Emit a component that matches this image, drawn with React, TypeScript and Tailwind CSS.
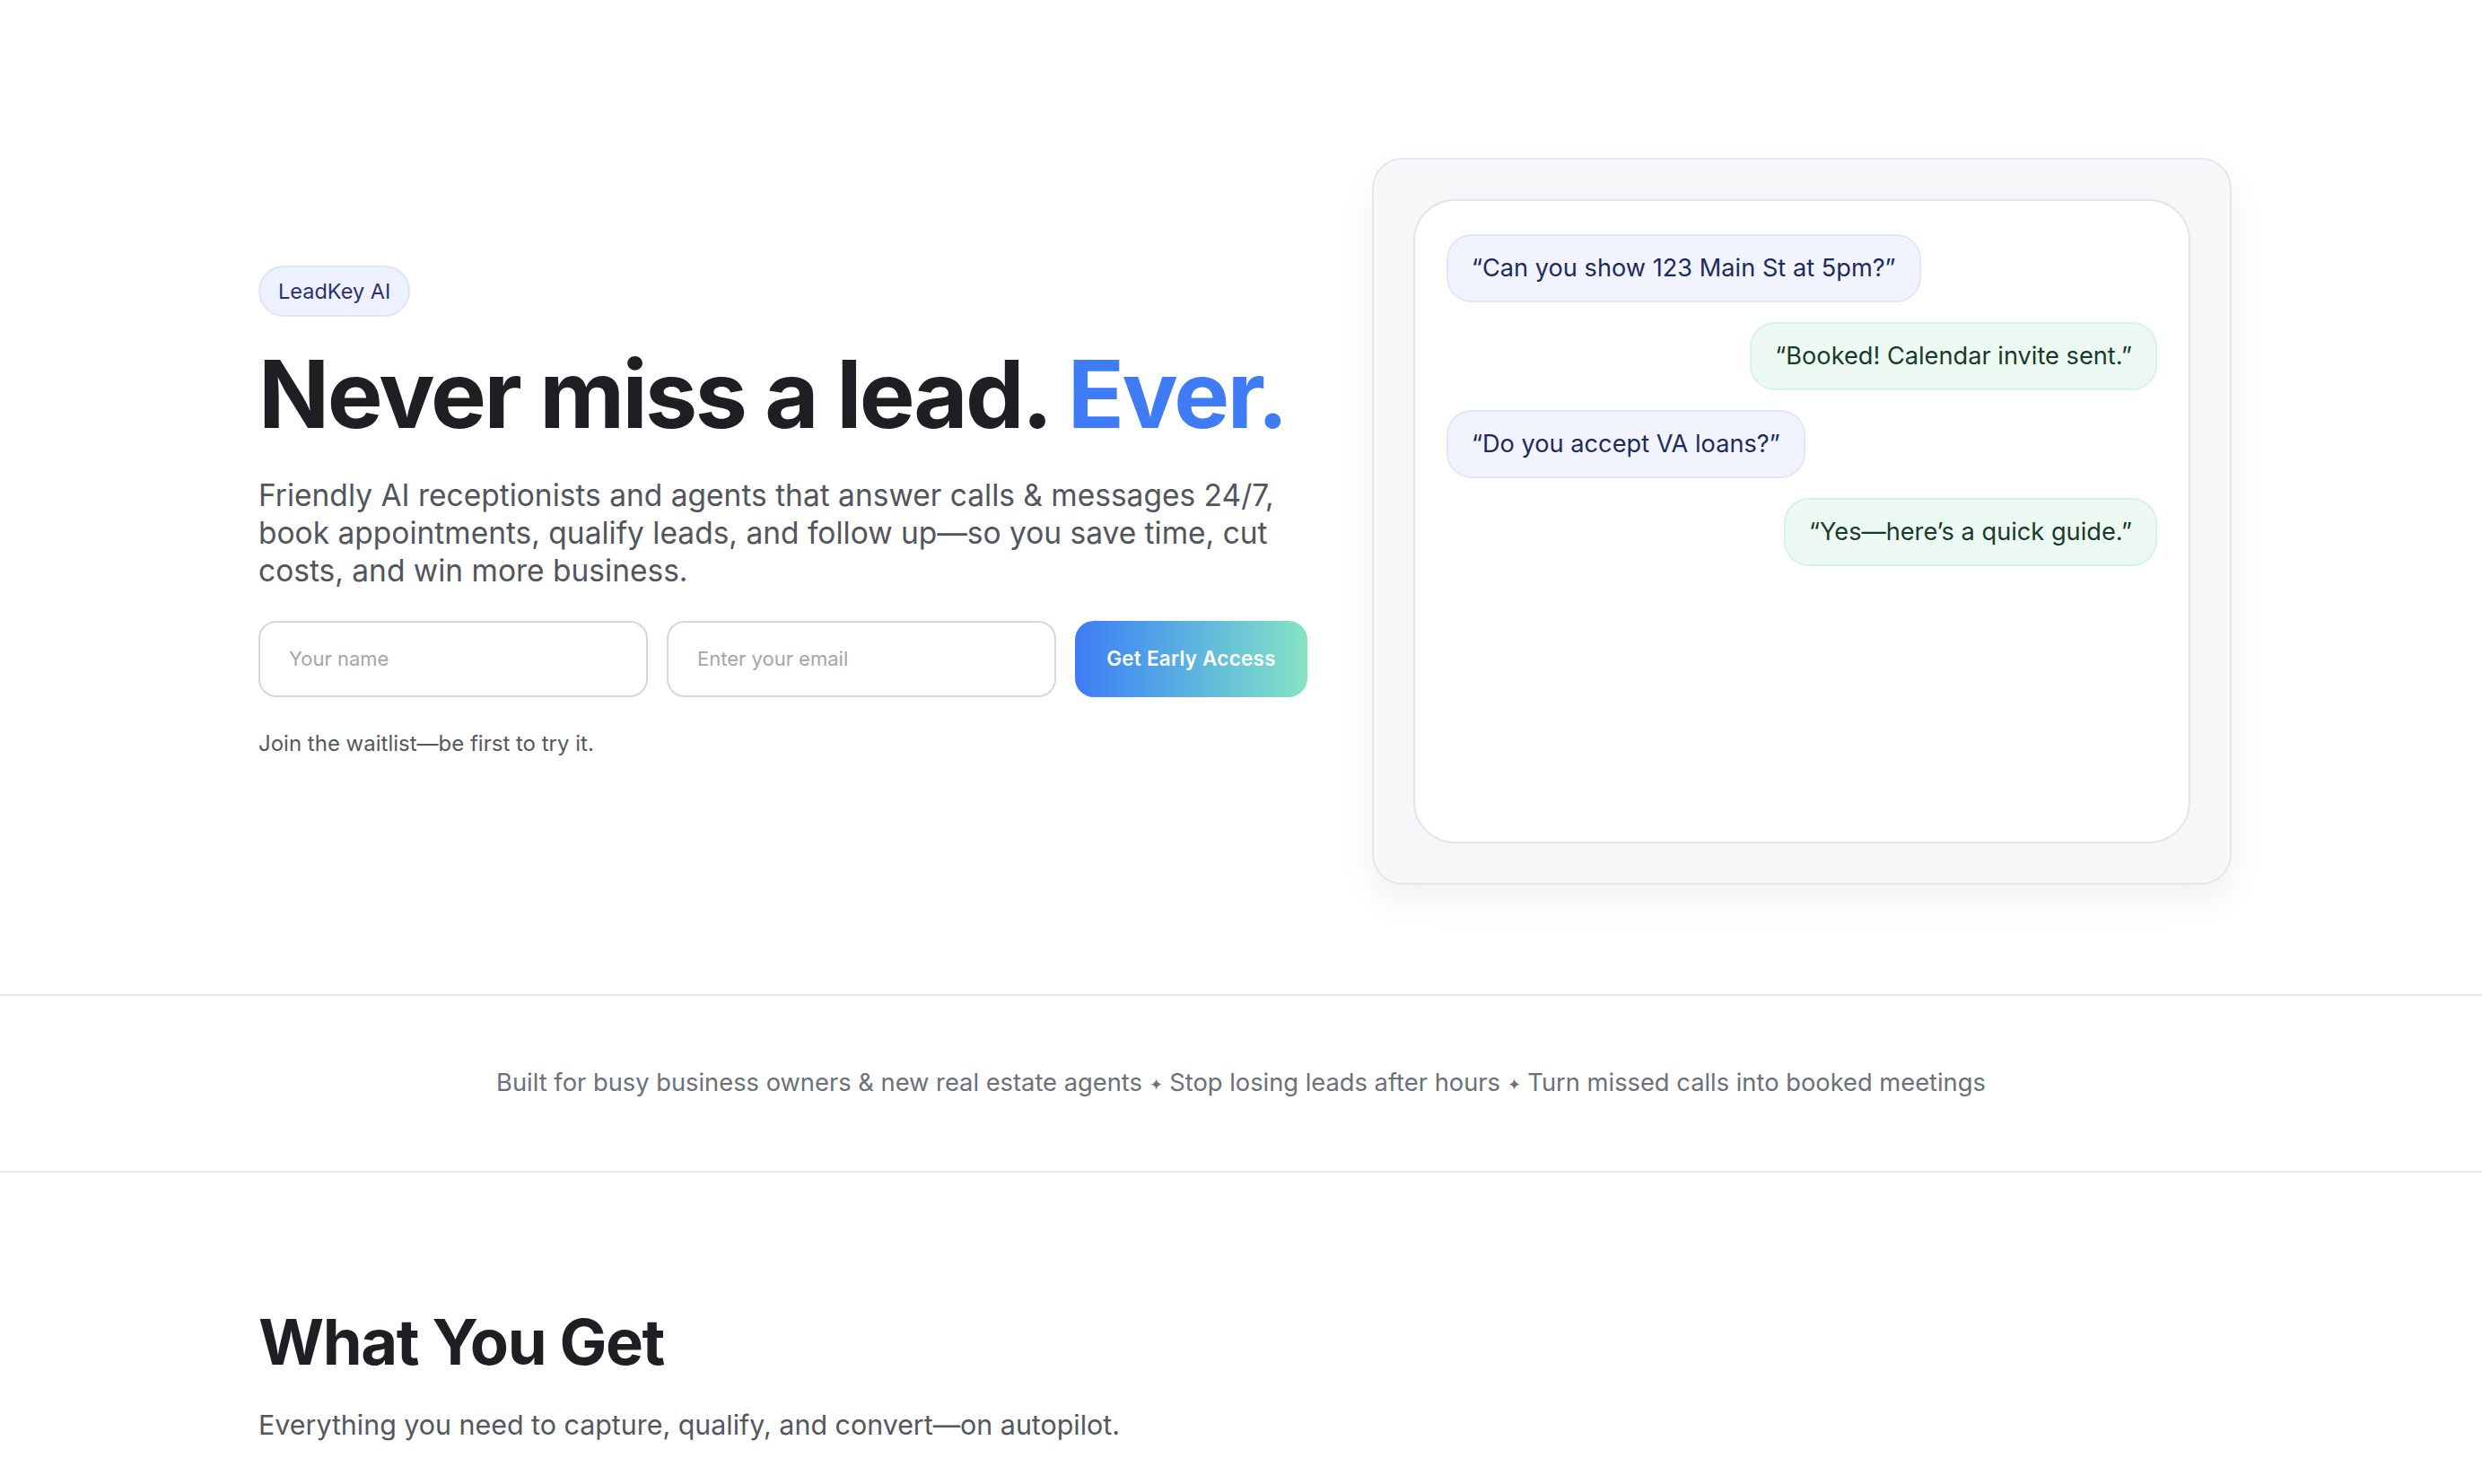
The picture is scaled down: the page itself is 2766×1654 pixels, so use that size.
import React from 'react';

const messages = [
  { text: '“Can you show 123 Main St at 5pm?”', from: 'lead' },
  { text: '“Booked! Calendar invite sent.”', from: 'ai' },
  { text: '“Do you accept VA loans?”', from: 'lead' },
  { text: '“Yes—here’s a quick guide.”', from: 'ai' },
];

function ChatPreview() {
  return (
    <div className="w-[958px] shrink-0 rounded-[34px] border-2 border-[#e4e6eb] bg-[#f6f7f9] p-[44px] shadow-[0_18px_40px_rgba(17,24,39,0.06)]">
      <div className="flex h-[718px] flex-col gap-[22px] rounded-[46px] border-2 border-[#e3e5ea] bg-white px-[35px] pt-[37px]">
        {messages.map((m, i) => (
          <div
            key={i}
            className={
              m.from === 'lead'
                ? 'self-start rounded-[28px] border-2 border-[#e1e6fb] bg-[#f1f4fe] px-[26px] py-[15px] text-[27.2px] leading-[42px] text-[#1f2a5c]'
                : 'self-end rounded-[28px] border-2 border-[#d6f3e5] bg-[#edfaf3] px-[26px] py-[15px] text-[27.2px] leading-[42px] text-[#183a2b]'
            }
          >
            {m.text}
          </div>
        ))}
      </div>
    </div>
  );
}

export default function App() {
  return (
    <div className="min-h-screen bg-white font-['Inter','Liberation_Sans',sans-serif] text-[#1d1f23]">
      {/* Hero */}
      <section className="flex items-center gap-[72px] pl-[288px] pt-[176px] pb-[122px]">
        <div className="w-[1169px] shrink-0 pb-[20px]">
          <span className="inline-block rounded-full border-2 border-[#dfe4fb] bg-[#eef1fe] px-[20px] py-[10px] text-[23.5px] leading-[33px] text-[#2b3170]">
            LeadKey AI
          </span>
          <h1 className="mt-[29px] text-[104px] font-bold leading-[1.1] tracking-[-0.025em]">
            Never miss a lead. <span className="text-[#3f7bf5]">Ever.</span>
          </h1>
          <p className="mt-[34px] w-[1160px] text-[33.5px] leading-[42px] text-[#52555d]">
            Friendly AI receptionists and agents that answer calls &amp; messages 24/7, book appointments, qualify leads, and follow up—so you save time, cut costs, and win more business.
          </p>
          <form className="mt-[35px] flex gap-[21px]" onSubmit={e => e.preventDefault()}>
            <input
              placeholder="Your name"
              className="h-[85px] flex-1 rounded-[20px] border-2 border-[#d5d7dc] bg-white px-[32px] text-[22px] text-[#1d1f23] outline-none placeholder:text-[#a3a6ad]"
            />
            <input
              placeholder="Enter your email"
              className="h-[85px] flex-1 rounded-[20px] border-2 border-[#d5d7dc] bg-white px-[32px] text-[22px] text-[#1d1f23] outline-none placeholder:text-[#a3a6ad]"
            />
            <button
              type="submit"
              className="h-[85px] w-[259px] rounded-[21px] bg-linear-to-r from-[#3f7bf5] to-[#86e4c1] text-[22.5px] font-semibold tracking-[0.01em] text-white"
            >
              Get Early Access
            </button>
          </form>
          <p className="mt-[34px] text-[24px] leading-[35px] text-[#55585f]">
            Join the waitlist—be first to try it.
          </p>
        </div>

        <ChatPreview />
      </section>

      {/* Strip */}
      <section className="flex h-[199px] items-center justify-center border-y-2 border-[#e5e7eb] text-[27.3px] text-[#6b7079]">
        <p>
          Built for busy business owners &amp; new real estate agents{' '}
          <span className="text-[18px] align-middle">✦</span> Stop losing leads after hours{' '}
          <span className="text-[18px] align-middle">✦</span> Turn missed calls into booked meetings
        </p>
      </section>

      {/* What you get */}
      <section className="pl-[288px] pt-[147px] pb-[200px]">
        <h2 className="text-[70.5px] font-bold leading-[1.2] tracking-[-0.02em]">What You Get</h2>
        <p className="mt-[28px] text-[30.4px] leading-[42px] text-[#54575f]">
          Everything you need to capture, qualify, and convert—on autopilot.
        </p>
      </section>
    </div>
  );
}
